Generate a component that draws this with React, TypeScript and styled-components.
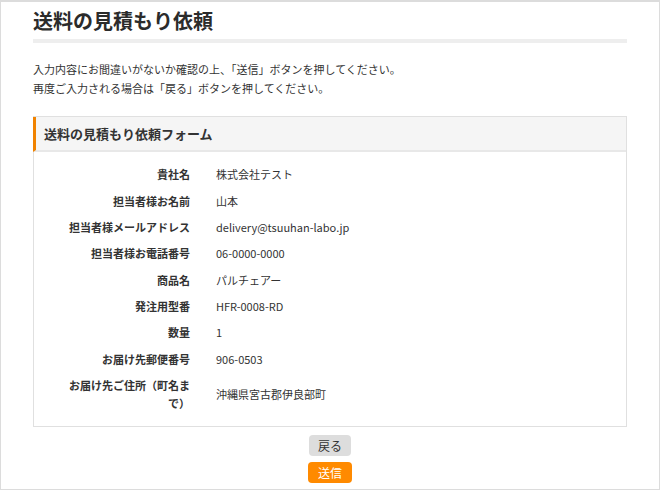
import styled, { createGlobalStyle } from 'styled-components';

const GlobalStyle = createGlobalStyle`
    * {
        box-sizing: border-box;
    }

    body {
        margin: 0;
        background: #fff;
        color: #333;
        font-family: "Noto Sans CJK JP", "Noto Sans", sans-serif;
    }
`;

const Frame = styled.div`
    height: 490px;
    border: 1px solid #dcdcdc;
    border-top-width: 2px;
    padding: 5px 32px 0;
`;

const Title = styled.h1`
    margin: 0;
    font-size: 20px;
    line-height: 28px;
    font-weight: 700;
    color: #2b2b2b;
    padding-bottom: 4px;
    border-bottom: 4px solid #eeeeee;
`;

const Lead = styled.p`
    margin: 17px 0 18px;
    font-size: 11px;
    line-height: 19px;
`;

const Card = styled.section`
    border: 1px solid #e0e0e0;
`;

const CardHeader = styled.h2`
    margin: 0 0 0 -1px;
    height: 35px;
    display: flex;
    align-items: center;
    padding-left: 8px;
    background: #f5f5f5;
    border-left: 3px solid #f08200;
    border-bottom: 2px solid #e8e8e8;
    font-size: 13px;
    font-weight: 700;
    color: #333;
`;

const CardBody = styled.div`
    padding: 9px 0 10px;
`;

const Row = styled.div`
    display: grid;
    grid-template-columns: 156px 1fr;
    column-gap: 26px;
    align-items: center;
    padding: 4.2px 0;
    font-size: 11px;
    line-height: 18px;
`;

const Label = styled.div`
    padding-left: 26px;
    text-align: right;
    font-weight: 700;
`;

const Value = styled.div`
    color: #333;
`;

const Actions = styled.div`
    display: flex;
    flex-direction: column;
    align-items: center;
    gap: 6px;
    margin-top: 8px;
`;

const Button = styled.button<{ $primary?: boolean }>`
    height: 21px;
    padding: 0 ${(p) => (p.$primary ? '10px' : '9px')};
    border: none;
    border-radius: 4px;
    font-family: inherit;
    font-size: 12px;
    line-height: 21px;
    cursor: pointer;
    background: ${(p) => (p.$primary ? '#ff8a00' : '#dddddd')};
    color: ${(p) => (p.$primary ? '#fff' : '#333')};
`;

const rows: [string, string][] = [
    ['貴社名', '株式会社テスト'],
    ['担当者様お名前', '山本'],
    ['担当者様メールアドレス', 'delivery@tsuuhan-labo.jp'],
    ['担当者様お電話番号', '06-0000-0000'],
    ['商品名', 'パルチェアー'],
    ['発注用型番', 'HFR-0008-RD'],
    ['数量', '1'],
    ['お届け先郵便番号', '906-0503'],
    ['お届け先ご住所（町名まで）', '沖縄県宮古郡伊良部町'],
];

const App = (): JSX.Element => {
    return (
        <>
            <GlobalStyle />
            <Frame>
                <Title>送料の見積もり依頼</Title>
                <Lead>
                    入力内容にお間違いがないか確認の上、「送信」ボタンを押してください。<br />
                    再度ご入力される場合は「戻る」ボタンを押してください。
                </Lead>
                <Card>
                    <CardHeader>送料の見積もり依頼フォーム</CardHeader>
                    <CardBody>
                        {rows.map(([label, value]) => (
                            <Row key={label}>
                                <Label>{label}</Label>
                                <Value>{value}</Value>
                            </Row>
                        ))}
                    </CardBody>
                </Card>
                <Actions>
                    <Button type='button'>戻る</Button>
                    <Button type='button' $primary>送信</Button>
                </Actions>
            </Frame>
        </>
    );
};

export default App;
